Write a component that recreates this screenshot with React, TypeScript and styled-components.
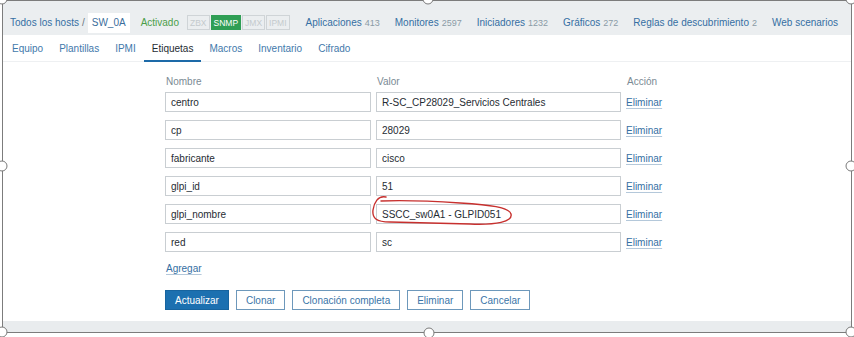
import React from "react";
import styled, { createGlobalStyle } from "styled-components";

const Global = createGlobalStyle`
  html, body { margin: 0; padding: 0; background: #ffffff; }
  body { font-family: "Liberation Sans", Arial, sans-serif; font-size: 10px; color: #1f2c33; }
  * { box-sizing: border-box; }
`;

const Page = styled.div`
  position: relative;
  width: 854px;
  height: 337px;
  background: #fff;
  overflow: hidden;
`;

const Frame = styled.div`
  margin-left: 2px;
  width: 850px;
  height: 333px;
  border: 1px solid #7c7c7c;
  display: flex;
  flex-direction: column;
  background: #fff;
`;

const HostNav = styled.div`
  height: 34px;
  background: #ebeef0;
  display: flex;
  align-items: center;
  padding: 9px 0 0 7px;
  white-space: nowrap;
`;

const Crumb = styled.span`
  color: #356fa3;
`;

const Slash = styled.span`
  color: #687780;
  margin: 0 3px 0 3px;
`;

const CurrentHost = styled.span`
  background: #fff;
  height: 20px;
  padding: 0 4px;
  display: flex;
  align-items: center;
  color: #3a6e9c;
`;

const Status = styled.span`
  color: #4c9e4a;
  margin-left: 11px;
`;

const Badges = styled.div`
  display: flex;
  gap: 1px;
  margin-left: 8px;
  margin-right: 16px;
`;

const Badge = styled.span<{ $on?: boolean }>`
  height: 15px;
  padding: 0 2px;
  display: flex;
  align-items: center;
  font-size: 8.5px;
  border: 1px solid ${(p) => (p.$on ? "#2f9e55" : "#cfd4d7")};
  background: ${(p) => (p.$on ? "#2f9e55" : "transparent")};
  color: ${(p) => (p.$on ? "#ffffff" : "#c4cacd")};
`;

const NavLinks = styled.div`
  display: flex;
  gap: 15px;
`;

const NavLink = styled.span`
  color: #356fa3;
`;

const Count = styled.span`
  color: #8a9ba6;
  font-size: 9px;
  margin-left: 3px;
`;

const TabBar = styled.div`
  height: 27px;
  display: flex;
  padding-left: 1px;
  padding-top: 1px;
  border-bottom: 1px solid #eef0f2;
  background: #fff;
`;

const Tab = styled.span<{ $active?: boolean }>`
  padding: 0 8px;
  display: flex;
  align-items: center;
  color: ${(p) => (p.$active ? "#1f2c33" : "#3f79ab")};
  border-bottom: 2px solid ${(p) => (p.$active ? "#1d6aa8" : "transparent")};
  margin-bottom: -1px;
`;

const Content = styled.div`
  flex: 1;
  padding: 13px 0 0 162px;
  display: flex;
  flex-direction: column;
`;

const TagGrid = styled.div`
  display: grid;
  grid-template-columns: 206px 245px auto;
  column-gap: 5px;
  row-gap: 8px;
  align-items: center;
`;

const HeadCell = styled.div`
  color: #7b8a94;
  height: 14px;
  line-height: 14px;
  padding-left: 1px;
  margin-bottom: -5px;
`;

const Field = styled.div`
  height: 20px;
  border: 1px solid #c9ced2;
  background: #fff;
  display: flex;
  align-items: center;
  padding: 0 5px;
  color: #1f2c33;
  white-space: nowrap;
`;

const ActionLink = styled.span`
  color: #356fa3;
  justify-self: start;
  text-decoration: underline;
  text-decoration-color: #b4c8da;
  text-underline-offset: 2px;
`;

const AddLink = styled(ActionLink)`
  margin-top: 10px;
  align-self: flex-start;
  margin-left: 1px;
  line-height: 14px;
`;

const Buttons = styled.div`
  display: flex;
  gap: 7px;
  margin-top: 14px;
`;

const Button = styled.span<{ $primary?: boolean }>`
  height: 20px;
  padding: 0 9px;
  display: flex;
  align-items: center;
  border: 1px solid ${(p) => (p.$primary ? "#17649f" : "#6d98bb")};
  background: ${(p) => (p.$primary ? "#1c70b0" : "#ffffff")};
  color: ${(p) => (p.$primary ? "#ffffff" : "#3a75a8")};
`;

const Footer = styled.div`
  height: 11px;
  background: #e9ecee;
`;

const Annotation = styled.svg`
  position: absolute;
  left: 0;
  top: 0;
  pointer-events: none;
`;

const Handle = styled.div`
  position: absolute;
  width: 11px;
  height: 11px;
  border-radius: 50%;
  border: 1px solid #7a7a7a;
  background: #fff;
  transform: translate(-50%, -50%);
`;

const tags: [string, string][] = [
  ["centro", "R-SC_CP28029_Servicios Centrales"],
  ["cp", "28029"],
  ["fabricante", "cisco"],
  ["glpi_id", "51"],
  ["glpi_nombre", "SSCC_sw0A1 - GLPID051"],
  ["red", "sc"],
];

const navLinks: [string, string][] = [
  ["Aplicaciones", "413"],
  ["Monitores", "2597"],
  ["Iniciadores", "1232"],
  ["Gráficos", "272"],
  ["Reglas de descubrimiento", "2"],
  ["Web scenarios", ""],
];

const tabs = ["Equipo", "Plantillas", "IPMI", "Etiquetas", "Macros", "Inventario", "Cifrado"];

const handles: [number, number][] = [
  [2, -1],
  [428, -1],
  [851, -1],
  [2, 166],
  [851, 166],
  [2, 332],
  [429, 333],
  [851, 332],
];

export default function App() {
  return (
    <Page>
      <Global />
      <Frame>
        <HostNav>
          <Crumb>Todos los hosts</Crumb>
          <Slash>/</Slash>
          <CurrentHost>SW_0A</CurrentHost>
          <Status>Activado</Status>
          <Badges>
            <Badge>ZBX</Badge>
            <Badge $on>SNMP</Badge>
            <Badge>JMX</Badge>
            <Badge>IPMI</Badge>
          </Badges>
          <NavLinks>
            {navLinks.map(([label, count]) => (
              <NavLink key={label}>
                {label}
                {count && <Count>{count}</Count>}
              </NavLink>
            ))}
          </NavLinks>
        </HostNav>
        <TabBar>
          {tabs.map((t) => (
            <Tab key={t} $active={t === "Etiquetas"}>
              {t}
            </Tab>
          ))}
        </TabBar>
        <Content>
          <TagGrid>
            <HeadCell>Nombre</HeadCell>
            <HeadCell>Valor</HeadCell>
            <HeadCell>Acción</HeadCell>
            {tags.map(([name, value]) => (
              <React.Fragment key={name}>
                <Field>{name}</Field>
                <Field>{value}</Field>
                <ActionLink>Eliminar</ActionLink>
              </React.Fragment>
            ))}
          </TagGrid>
          <AddLink>Agregar</AddLink>
          <Buttons>
            <Button $primary>Actualizar</Button>
            <Button>Clonar</Button>
            <Button>Clonación completa</Button>
            <Button>Eliminar</Button>
            <Button>Cancelar</Button>
          </Buttons>
        </Content>
        <Footer />
      </Frame>
      <Annotation width="854" height="337" viewBox="0 0 854 337">
        <path
          d="M 386 197 C 378 195, 374 203, 373 210 C 372 218, 376 222, 390 222 L 470 224 C 496 225, 513 222, 511 214 C 509 207, 490 205, 460 203 C 430 201, 405 200, 381 201"
          fill="none"
          stroke="#c7302e"
          strokeWidth="1.4"
          strokeLinecap="round"
        />
      </Annotation>
      {handles.map(([x, y], i) => (
        <Handle key={i} style={{ left: x, top: y }} />
      ))}
    </Page>
  );
}
